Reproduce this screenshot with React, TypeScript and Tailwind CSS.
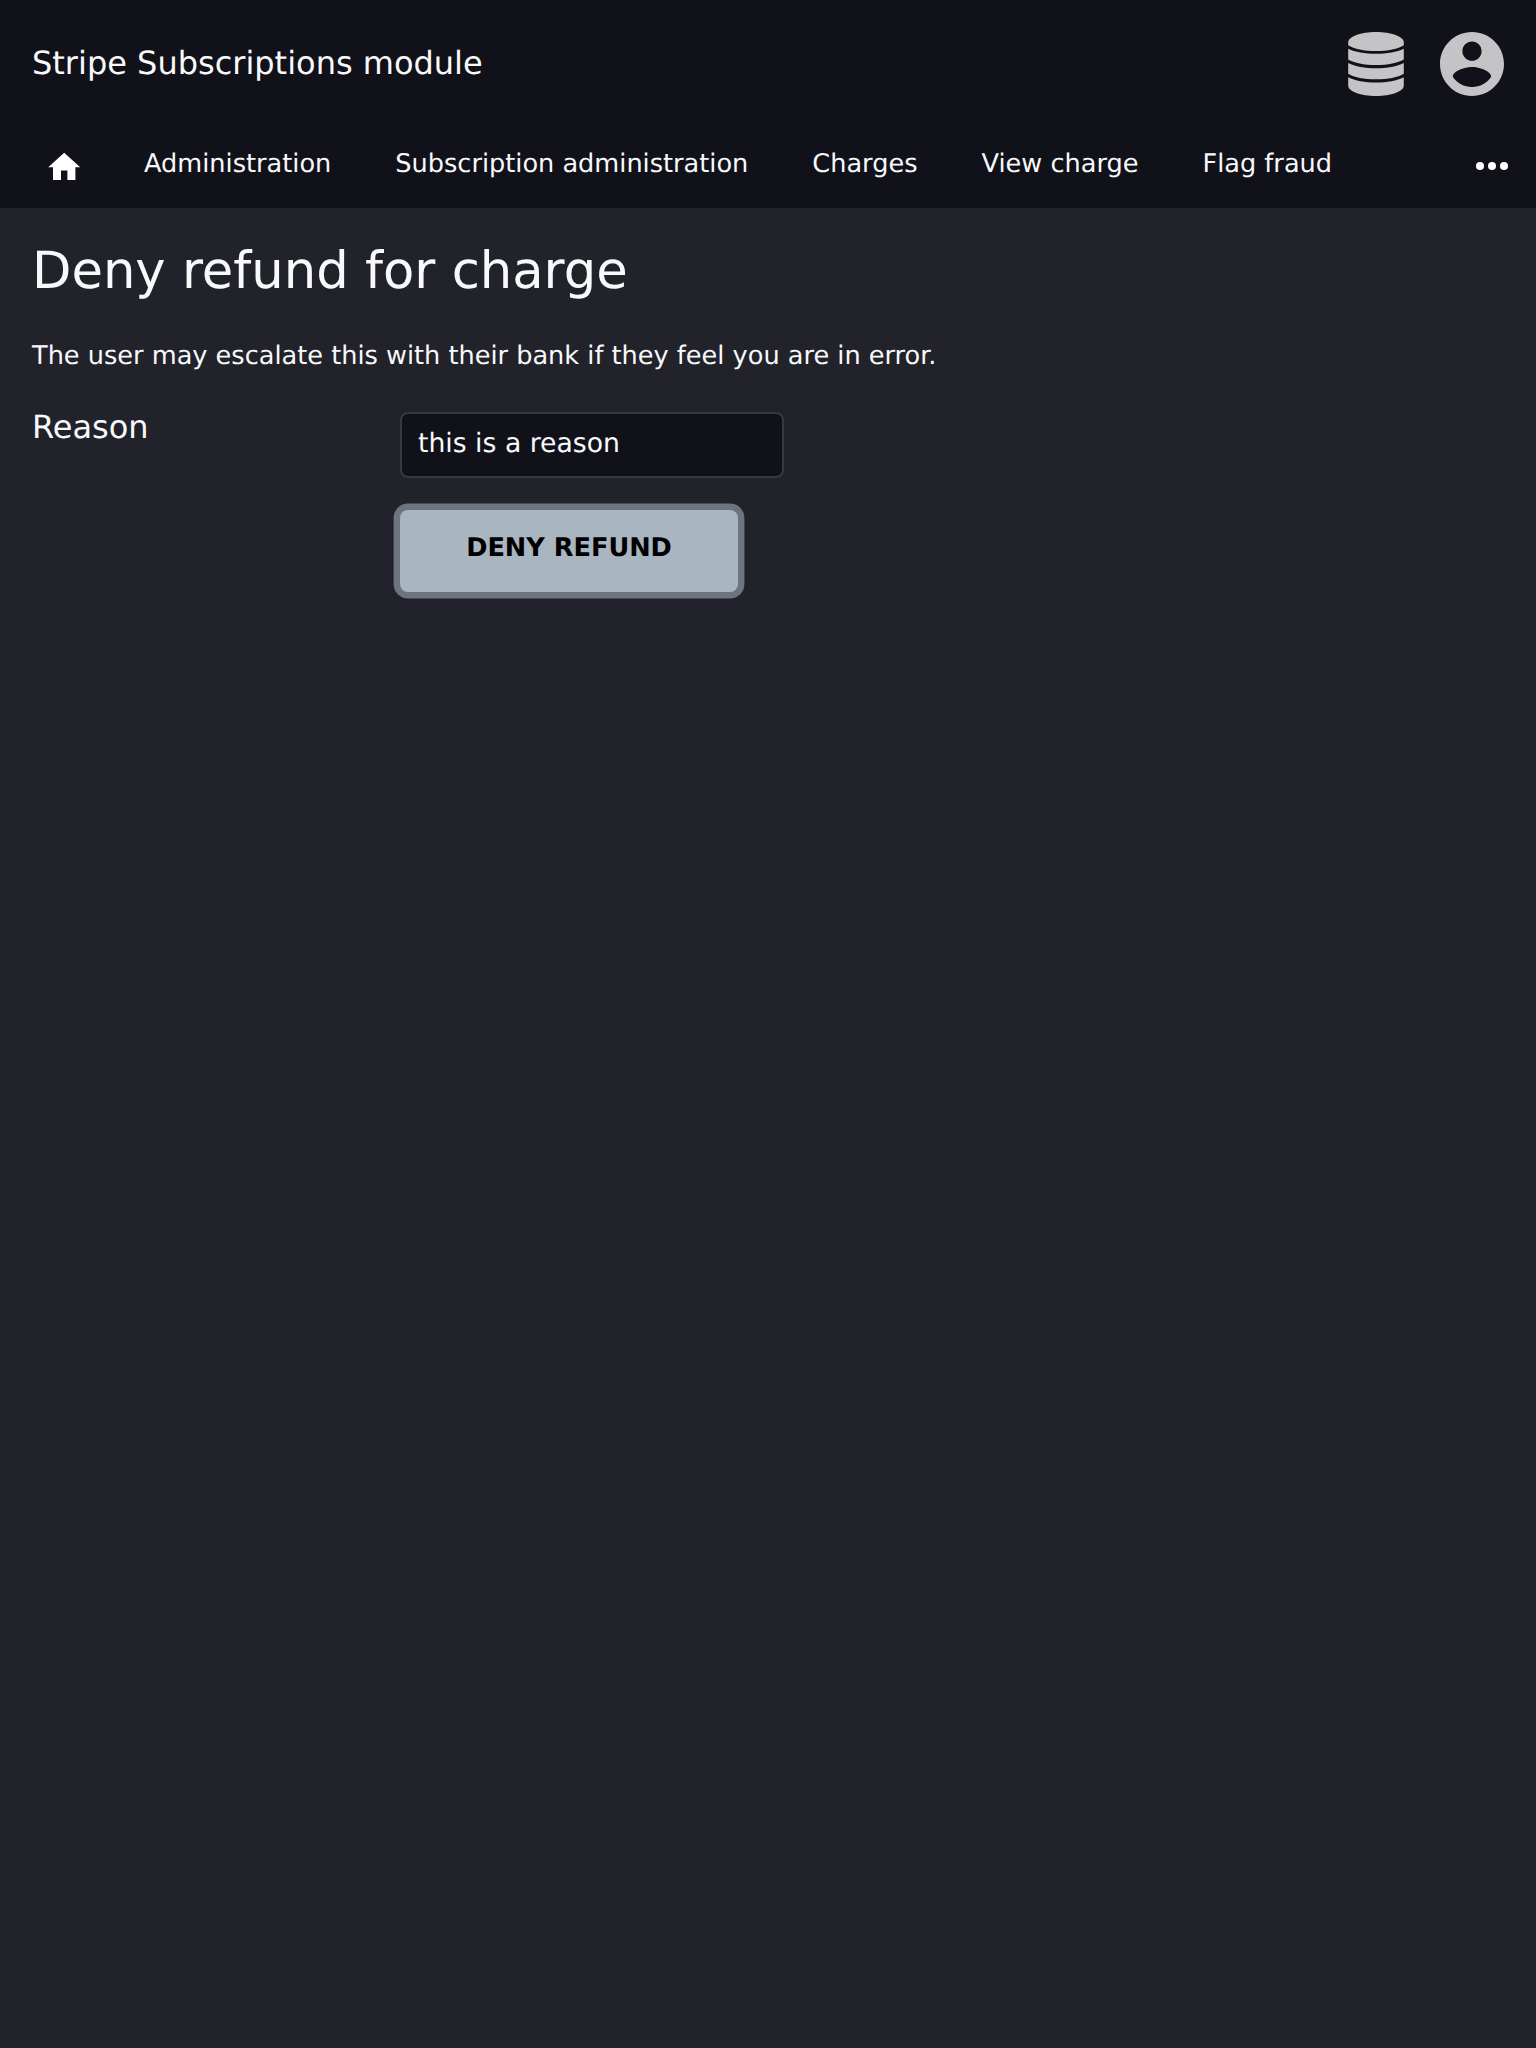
const tabs = ["Administration", "Subscription administration", "Charges", "View charge", "Flag fraud"];

function DatabaseIcon() {
  return (
    <svg className="h-16 w-14" viewBox="0 0 56 64" fill="#c4c4c6">
      <path d="M0.2 10.5C0.2 4.5 13 0 28 0S55.8 4.5 55.8 10.5V13.2C50 17 40 19 28 19S6 17 0.2 13.2Z" />
      <path d="M0.2 16.7C7 20 17 21.8 28 21.8S49 20 55.8 16.7V27.5C50 31 40 33 28 33S6 31 0.2 27.5Z" />
      <path d="M0.2 30.9C7 34.4 17 36.3 28 36.3S49 34.4 55.8 30.9V41.7C50 45.3 40 47.3 28 47.3S6 45.3 0.2 41.7Z" />
      <path d="M0.2 45.2C7 48.7 17 50.6 28 50.6S49 48.7 55.8 45.2V53.5C55.8 59.5 43 64 28 64S0.2 59.5 0.2 53.5Z" />
    </svg>
  );
}

function AccountIcon() {
  return (
    <svg className="size-16" viewBox="2 2 20 20" fill="#c4c4c6">
      <path d="M12 2C6.48 2 2 6.48 2 12s4.48 10 10 10 10-4.48 10-10S17.52 2 12 2zm0 3c1.66 0 3 1.34 3 3s-1.34 3-3 3-3-1.34-3-3 1.34-3 3-3zm0 14.2c-2.5 0-4.71-1.28-6-3.22.03-1.99 4-3.08 6-3.08 1.99 0 5.97 1.09 6 3.08-1.29 1.94-3.5 3.22-6 3.22z" />
    </svg>
  );
}

export default function App() {
  return (
    <div className="min-h-[2048px] bg-[#22222a] font-['DejaVu_Sans',sans-serif] text-[25.6px] text-[#f8f9fa] [text-rendering:geometricPrecision]">
      <header className="h-[208px] bg-[#11111a]">
        <div className="flex h-32 items-center justify-between px-8">
          <span className="pb-0.5 text-[32px] leading-[38px]">Stripe Subscriptions module</span>
          <div className="flex items-center gap-9">
            <DatabaseIcon />
            <AccountIcon />
          </div>
        </div>
        <nav className="flex h-[76px] items-center pr-5 pl-[44.8px]">
          <svg className="mt-0.5 size-[38.4px] shrink-0" viewBox="0 0 24 24" fill="#ffffff">
            <path d="M10 20v-6h4v6h5v-8h3L12 3 2 12h3v8z" />
          </svg>
          <div className="ml-[60.8px] flex gap-16 pb-1 whitespace-nowrap">
            {tabs.map((tab) => (
              <a key={tab}>{tab}</a>
            ))}
          </div>
          <svg className="ml-auto size-12 shrink-0" viewBox="0 0 24 24" fill="#ffffff">
            <circle cx="6" cy="12" r="2" />
            <circle cx="12" cy="12" r="2" />
            <circle cx="18" cy="12" r="2" />
          </svg>
        </nav>
      </header>
      <main className="px-8 pt-[33px]">
        <h1 className="text-[51.2px] leading-[60px]">Deny refund for charge</h1>
        <p className="mt-10 leading-[30px]">The user may escalate this with their bank if they feel you are in error.</p>
        <form className="mt-[41px] grid grid-cols-[368px_1fr]">
          <label className="text-[32px] leading-[30px]">Reason</label>
          <div className="flex flex-col items-start">
            <input
              className="h-[66px] w-[384px] rounded-lg border-2 border-[#343a40] bg-[#11111a] px-4 pb-1 text-[26.667px] outline-none [text-rendering:geometricPrecision]"
              defaultValue="this is a reason"
            />
            <button
              type="button"
              className="mt-8 h-[82px] w-[338px] rounded-lg bg-[#a9b5c1] pb-1.5 font-bold text-black shadow-[0_0_0_6.4px_#6c757d] [text-rendering:geometricPrecision]"
            >
              DENY REFUND
            </button>
          </div>
        </form>
      </main>
    </div>
  );
}
